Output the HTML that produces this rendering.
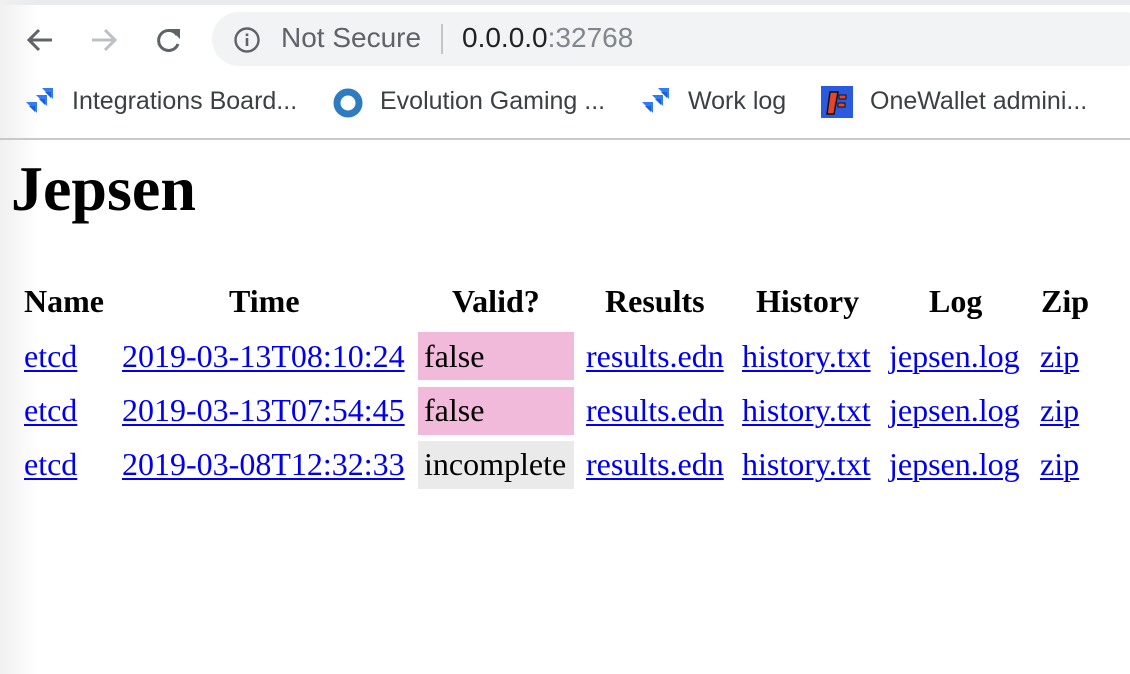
<!DOCTYPE html>
<html><head><meta charset="utf-8"><style>
*{margin:0;padding:0;box-sizing:border-box}
body{width:1130px;height:674px;overflow:hidden;background:#fff;position:relative;font-family:"Liberation Serif",serif}
.a{position:absolute;white-space:nowrap;line-height:1}
.ui{font-family:"Liberation Sans",sans-serif}
.t{font-size:32px}
.b{font-weight:bold}
a{color:#0000ee;text-decoration:underline;text-decoration-thickness:2px;text-underline-offset:3px}
.c{position:absolute;width:156px;height:48px;left:418px}
</style></head><body>
<div class="a" style="left:0;top:0;width:1130px;height:5px;background:#e8eaed"></div>
<div class="a" style="left:0;top:0;width:40px;height:674px;background:linear-gradient(to right,#f0f0f0,rgba(255,255,255,0))"></div>
<div class="a" style="left:212px;top:12px;width:940px;height:54px;border-radius:27px;background:#f1f3f4"></div>
<svg class="a" style="left:22px;top:22px" width="36" height="36" viewBox="0 0 36 36"><path d="M30 18H8M17 8L7 18l10 10" stroke="#5f6368" stroke-width="3" fill="none"/></svg>
<svg class="a" style="left:86px;top:22px" width="36" height="36" viewBox="0 0 36 36"><path d="M6 18h22M19 8l10 10-10 10" stroke="#bdc1c6" stroke-width="3" fill="none"/></svg>
<svg class="a" style="left:150px;top:22px" width="36" height="36" viewBox="0 0 36 36"><path d="M27 13A10 10 0 1 0 28 22" stroke="#5f6368" stroke-width="3" fill="none"/><path d="M20 7h10v10z" fill="#5f6368"/></svg>
<svg class="a" style="left:233px;top:26px" width="28" height="28" viewBox="0 0 28 28"><circle cx="14" cy="14" r="11.5" stroke="#5f6368" stroke-width="2.4" fill="none"/><rect x="12.7" y="12" width="2.6" height="8" fill="#5f6368"/><rect x="12.7" y="7.5" width="2.6" height="2.6" fill="#5f6368"/></svg>
<div class="a ui" style="left:281px;top:24px;font-size:28px;color:#5f6368">Not Secure</div>
<div class="a" style="left:441px;top:24px;width:2px;height:30px;background:#c4c7ca"></div>
<div class="a ui" style="left:462px;top:24px;font-size:28px;color:#202124">0.0.0.0<span style="color:#80868b">:32768</span></div>
<svg class="a" style="left:25px;top:87px" width="30" height="30" viewBox="0 0 30 30"><path d="M17 1h11v11l-4-4zM11 8h11v11l-4-4zM1 15h11v11l-4-4z" fill="#2f7df6"/><path d="M20 5h6v6zM14 12h6v6zM4 19h6v6z" fill="#1e5fd8"/></svg>
<div class="a ui" style="left:72px;top:89px;font-size:25px;color:#3c4043">Integrations Board...</div>
<svg class="a" style="left:333px;top:88px" width="30" height="30"><circle cx="15" cy="15" r="11" stroke="#2e7bc0" stroke-width="7" fill="none"/></svg>
<div class="a ui" style="left:380px;top:89px;font-size:25px;color:#3c4043">Evolution Gaming ...</div>
<svg class="a" style="left:641px;top:87px" width="30" height="30" viewBox="0 0 30 30"><path d="M17 1h11v11l-4-4zM11 8h11v11l-4-4zM1 15h11v11l-4-4z" fill="#2f7df6"/><path d="M20 5h6v6zM14 12h6v6zM4 19h6v6z" fill="#1e5fd8"/></svg>
<div class="a ui" style="left:688px;top:89px;font-size:25px;color:#3c4043">Work log</div>
<svg class="a" style="left:821px;top:86px" width="32" height="32"><rect width="32" height="32" fill="#2a5ae0"/><path d="M9 6h8l-4 22H6z" fill="#e5452a" stroke="#111" stroke-width="1.5"/><rect x="18" y="9" width="7" height="4" fill="#e5452a" stroke="#111"/><rect x="17" y="17" width="7" height="4" fill="#e5452a" stroke="#111"/></svg>
<div class="a ui" style="left:870px;top:89px;font-size:25px;color:#3c4043">OneWallet admini...</div>
<div class="a" style="left:0;top:138px;width:1130px;height:2px;background:#c8c8c8"></div>

<div class="a b" style="left:11px;top:157px;font-size:64px">Jepsen</div>

<div class="c" style="top:332px;background:#f1b9da"></div>
<div class="c" style="top:387px;background:#f1b9da"></div>
<div class="c" style="top:441px;background:#eaeaea"></div>

<div class="a t b" style="left:24px;top:285px">Name</div>
<div class="a t b" style="left:229px;top:285px">Time</div>
<div class="a t b" style="left:452px;top:285px">Valid?</div>
<div class="a t b" style="left:605px;top:285px">Results</div>
<div class="a t b" style="left:756px;top:285px">History</div>
<div class="a t b" style="left:929px;top:285px">Log</div>
<div class="a t b" style="left:1041px;top:285px">Zip</div>

<div class="a t" style="left:24px;top:340px"><a>etcd</a></div>
<div class="a t" style="left:122px;top:340px"><a>2019-03-13T08:10:24</a></div>
<div class="a t" style="left:424px;top:340px">false</div>
<div class="a t" style="left:586px;top:340px"><a>results.edn</a></div>
<div class="a t" style="left:742px;top:340px"><a>history.txt</a></div>
<div class="a t" style="left:889px;top:340px"><a>jepsen.log</a></div>
<div class="a t" style="left:1040px;top:340px"><a>zip</a></div>

<div class="a t" style="left:24px;top:394px"><a>etcd</a></div>
<div class="a t" style="left:122px;top:394px"><a>2019-03-13T07:54:45</a></div>
<div class="a t" style="left:424px;top:394px">false</div>
<div class="a t" style="left:586px;top:394px"><a>results.edn</a></div>
<div class="a t" style="left:742px;top:394px"><a>history.txt</a></div>
<div class="a t" style="left:889px;top:394px"><a>jepsen.log</a></div>
<div class="a t" style="left:1040px;top:394px"><a>zip</a></div>

<div class="a t" style="left:24px;top:448px"><a>etcd</a></div>
<div class="a t" style="left:122px;top:448px"><a>2019-03-08T12:32:33</a></div>
<div class="a t" style="left:424px;top:448px">incomplete</div>
<div class="a t" style="left:586px;top:448px"><a>results.edn</a></div>
<div class="a t" style="left:742px;top:448px"><a>history.txt</a></div>
<div class="a t" style="left:889px;top:448px"><a>jepsen.log</a></div>
<div class="a t" style="left:1040px;top:448px"><a>zip</a></div>
</body></html>
